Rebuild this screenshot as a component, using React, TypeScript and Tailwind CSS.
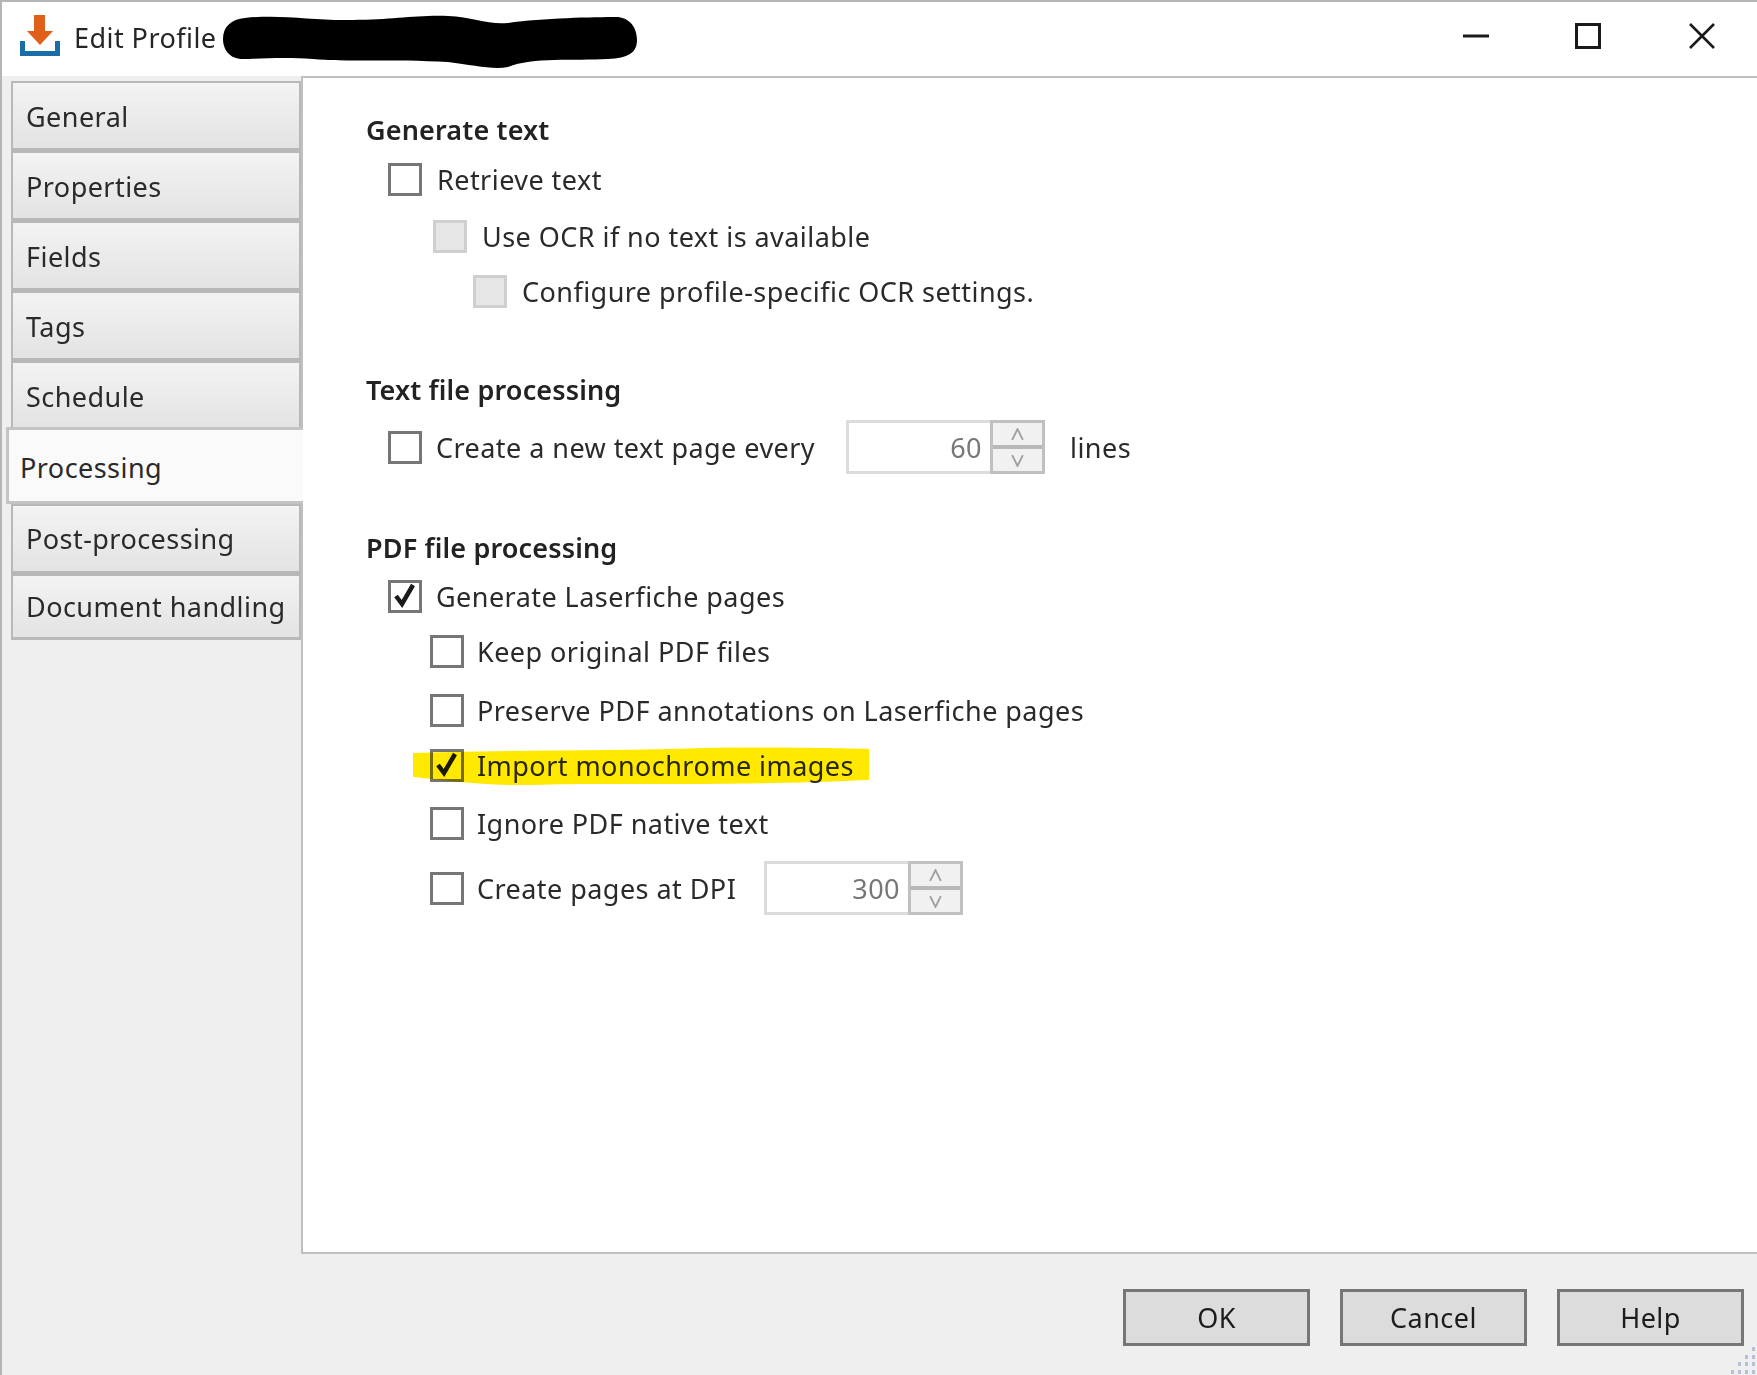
import type { ReactNode } from "react";

const before = ["General", "Properties", "Fields", "Tags", "Schedule"];

const CheckBox = ({ checked, disabled }: { checked?: boolean; disabled?: boolean }) => (
  <div
    className={`flex h-[33px] w-[34px] shrink-0 items-center justify-center border-[3px] ${
      disabled ? "border-[#cfcfcf] bg-[#e6e6e6]" : "border-[#767676]"
    }`}
  >
    {checked && (
      <svg viewBox="0 0 28 28" className="h-[28px] w-[28px]">
        <path d="M5 14 L11 22 L22 3" fill="none" stroke="#1a1a1a" strokeWidth="4.5" />
      </svg>
    )}
  </div>
);

const Arrow = ({ up }: { up?: boolean }) => (
  <svg viewBox="0 0 14 12" className="h-[13px] w-[15px]">
    <path d={up ? "M2 11 L7 1 L12 11" : "M2 1 L7 11 L12 1"} fill="none" stroke="#a0a0a0" strokeWidth="1.8" />
  </svg>
);

const Spinner = ({ value }: { value: string }) => (
  <div className="flex h-[54px]">
    <div className="flex w-[144px] items-center justify-end border-[3px] border-r-0 border-[#dcdcdc] pr-[8px] text-[#777]">{value}</div>
    <div className="flex w-[55px] flex-col border-[3px] border-[#c0c0c0] bg-[#f1f1f1]">
      <div className="flex flex-1 items-center justify-center border-b-4 border-[#b8b8b8]">
        <Arrow up />
      </div>
      <div className="flex flex-1 items-center justify-center">
        <Arrow />
      </div>
    </div>
  </div>
);

const Row = ({ className, children }: { className: string; children: ReactNode }) => (
  <div className={`flex h-[34px] items-center ${className}`}>{children}</div>
);

const Heading = ({ className, children }: { className: string; children: ReactNode }) => (
  <div className={`ml-[63px] flex h-[34px] items-center font-semibold tracking-[0.15px] text-[#222] ${className}`}>{children}</div>
);

const Tab = ({ className, children }: { className: string; children: ReactNode }) => (
  <div
    className={`ml-[9px] flex items-center border-2 border-b-[3px] border-[#b8b8b8] bg-gradient-to-b from-[#f3f3f3] to-[#e3e3e3] pl-[13px] ${className}`}
  >
    {children}
  </div>
);

const DialogButton = ({ label }: { label: string }) => (
  <button className="flex h-[57px] w-[187px] items-center justify-center border-[3px] border-[#767676] bg-[#dcdcdc] text-[#1c1c1c]">
    {label}
  </button>
);

export default function App() {
  return (
    <div className="relative flex h-[1375px] w-[1757px] flex-col overflow-hidden border-t-2 border-l-2 border-[#b5b5b5] bg-[#efefef] font-['Noto_Sans',sans-serif] text-[27px] leading-none tracking-[0.45px] text-[#2a2a2a] blur-[0.5px]">
      <div className="flex h-[74px] shrink-0 items-center bg-white pb-[4px]">
        <svg viewBox="0 0 40 41" className="mb-[4px] ml-[18px] h-[41px] w-[40px]">
          <path d="M14 0 H25 V16 H33 L20 30 L7 16 H14 Z" fill="#e0601a" />
          <path d="M0 26 H5 V36 H35 V26 H40 V41 H0 Z" fill="#1a6ea8" />
        </svg>
        <span className="ml-[14px] text-[#262626]">Edit Profile</span>
        <svg viewBox="0 0 414 53" preserveAspectRatio="none" className="mt-[9px] ml-[7px] h-[53px] w-[414px]">
          <path
            d="M22 3 C60 -1 90 6 130 5 C170 5 190 0 225 1 C250 2 265 10 285 8 C320 3 370 2 395 2 C410 4 414 16 414 25 C414 38 405 43 385 44 C350 46 310 42 285 52 C270 55 250 50 225 47 C170 44 120 47 90 44 C60 42 35 44 20 44 C6 44 0 34 0 24 C0 12 8 4 22 3 Z"
            fill="#000"
          />
        </svg>
        <div className="mb-[2px] ml-auto flex items-center pr-[42px]">
          <svg viewBox="0 0 26 26" className="h-[26px] w-[26px]">
            <path d="M0 13 H26" stroke="#1a1a1a" strokeWidth="3" />
          </svg>
          <svg viewBox="0 0 26 26" className="ml-[86px] h-[26px] w-[26px]">
            <rect x="1.5" y="1.5" width="23" height="23" fill="none" stroke="#1a1a1a" strokeWidth="3" />
          </svg>
          <svg viewBox="0 0 26 26" className="ml-[88px] h-[26px] w-[26px]">
            <path d="M1 1 L25 25 M25 1 L1 25" stroke="#1a1a1a" strokeWidth="2.6" />
          </svg>
        </div>
      </div>

      <div className="flex min-h-0 flex-1">
        <div className="flex w-[299px] shrink-0 flex-col pt-[5px]">
          {before.map((t) => (
            <Tab key={t} className="h-[70px] pt-[2px]">
              {t}
            </Tab>
          ))}
          <div className="relative z-10 -mt-[4px] -mr-[2px] ml-[4px] flex h-[77px] items-center border-y-[3px] border-l-[3px] border-[#c4c4c4] bg-[#fafafa] pt-[3px] pl-[11px]">
            Processing
          </div>
          <Tab className="h-[70px]">Post-processing</Tab>
          <Tab className="h-[66px]">Document handling</Tab>
        </div>

        <div className="flex min-w-0 flex-1 flex-col">
          <div className="h-[1178px] border-y-2 border-l-2 border-[#c0c0c0] bg-white pt-[34px]">
            <Heading className="">Generate text</Heading>
            <Row className="mt-[16px] ml-[85px] gap-[15px]">
              <CheckBox />
              Retrieve text
            </Row>
            <Row className="mt-[23px] ml-[130px] gap-[15px]">
              <CheckBox disabled />
              Use OCR if no text is available
            </Row>
            <Row className="mt-[21px] ml-[170px] gap-[15px]">
              <CheckBox disabled />
              Configure profile-specific OCR settings.
            </Row>

            <Heading className="mt-[64px]">Text file processing</Heading>
            <div className="mt-[14px] ml-[85px] flex h-[54px] items-center">
              <CheckBox />
              <span className="ml-[14px] w-[410px]">Create a new text page every</span>
              <Spinner value="60" />
              <span className="ml-[25px]">lines</span>
            </div>

            <Heading className="mt-[56px]">PDF file processing</Heading>
            <Row className="mt-[15px] ml-[85px] gap-[14px]">
              <CheckBox checked />
              Generate Laserfiche pages
            </Row>
            <Row className="mt-[21px] ml-[127px] gap-[13px]">
              <CheckBox />
              Keep original PDF files
            </Row>
            <Row className="mt-[25px] ml-[127px] gap-[13px]">
              <CheckBox />
              Preserve PDF annotations on Laserfiche pages
            </Row>
            <Row className="relative mt-[21px] ml-[127px] gap-[13px]">
              <CheckBox checked />
              Import monochrome images
              {/* marker stroke over the row */}
              <svg viewBox="0 0 456 42" className="absolute -top-[3px] -left-[17px] h-[42px] w-[456px] mix-blend-multiply">
                <path d="M0 8 C100 5 200 6 290 3 C350 2 420 3 456 4 L456 35 C300 42 200 37 120 40 C70 41 20 34 0 32 Z" fill="#ffe900" />
              </svg>
            </Row>
            <Row className="mt-[24px] ml-[127px] gap-[13px]">
              <CheckBox />
              Ignore PDF native text
            </Row>
            <div className="mt-[21px] ml-[127px] flex h-[54px] items-center">
              <CheckBox />
              <span className="ml-[13px] w-[287px]">Create pages at DPI</span>
              <Spinner value="300" />
            </div>
          </div>

          <div className="flex flex-1 items-start justify-end gap-[30px] pt-[35px] pr-[13px]">
            <DialogButton label="OK" />
            <DialogButton label="Cancel" />
            <DialogButton label="Help" />
          </div>
        </div>
      </div>

      <svg viewBox="0 0 28 30" className="absolute right-0 bottom-0 h-[30px] w-[28px]">
        <g fill="#b6c2d4">
          <rect x="23" y="2" width="3" height="4" />
          <rect x="16" y="10" width="3" height="4" />
          <rect x="23" y="10" width="3" height="4" />
          <rect x="9" y="17" width="3" height="4" />
          <rect x="16" y="17" width="3" height="4" />
          <rect x="23" y="17" width="3" height="4" />
          <rect x="2" y="25" width="3" height="4" />
          <rect x="9" y="25" width="3" height="4" />
          <rect x="16" y="25" width="3" height="4" />
          <rect x="23" y="25" width="3" height="4" />
        </g>
      </svg>
    </div>
  );
}
